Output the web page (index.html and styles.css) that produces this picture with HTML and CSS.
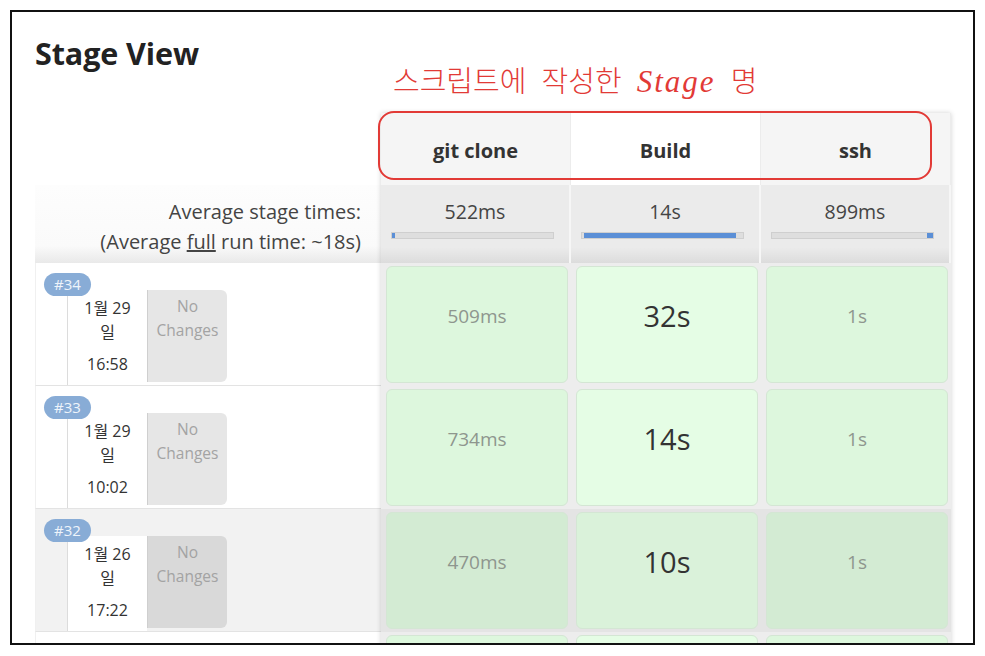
FILE: index.html
```html
<!DOCTYPE html>
<html lang="ko">
<head>
<meta charset="utf-8">
<title>Stage View</title>
<link rel="stylesheet" href="styles.css">
</head>
<body>
<div class="frame">
  <div class="head">
    <h2 class="title">Stage View</h2>
  </div>

  <div class="board">
    <div class="labels">
      <div class="lab-head"></div>
      <div class="lab-avg">
        <div>Average stage times:</div>
        <div>(Average <u>full</u> run time: ~18s)</div>
      </div>
      <div class="run">
        <span class="badge">#34</span>
        <div class="run-body">
          <div class="date"><div class="day">1월 29 일</div><div class="time">16:58</div></div>
          <div class="changes">No Changes</div>
        </div>
      </div>
      <div class="run">
        <span class="badge">#33</span>
        <div class="run-body">
          <div class="date"><div class="day">1월 29 일</div><div class="time">10:02</div></div>
          <div class="changes">No Changes</div>
        </div>
      </div>
      <div class="run hl">
        <span class="badge">#32</span>
        <div class="run-body">
          <div class="date"><div class="day">1월 26 일</div><div class="time">17:22</div></div>
          <div class="changes">No Changes</div>
        </div>
      </div>
      <div class="run"></div>
    </div>

    <div class="stages">
      <div class="st-head">git clone</div>
      <div class="st-head active">Build</div>
      <div class="st-head">ssh</div>

      <div class="st-avg"><div class="avg-time">522ms</div><div class="bar"><div class="fill" style="margin-left:0;width:3px"></div></div></div>
      <div class="st-avg"><div class="avg-time">14s</div><div class="bar"><div class="fill" style="margin-left:2px;width:152px"></div></div></div>
      <div class="st-avg"><div class="avg-time">899ms</div><div class="bar"><div class="fill" style="margin-left:155px;width:8px"></div></div></div>

      <div class="slot"><div class="cell minor">509ms</div></div>
      <div class="slot"><div class="cell major">32s</div></div>
      <div class="slot"><div class="cell minor">1s</div></div>

      <div class="slot"><div class="cell minor">734ms</div></div>
      <div class="slot"><div class="cell major">14s</div></div>
      <div class="slot"><div class="cell minor">1s</div></div>

      <div class="slot hl"><div class="cell minor">470ms</div></div>
      <div class="slot hl"><div class="cell major">10s</div></div>
      <div class="slot hl"><div class="cell minor">1s</div></div>

      <div class="slot"><div class="cell minor"></div></div>
      <div class="slot"><div class="cell major"></div></div>
      <div class="slot"><div class="cell minor"></div></div>
    </div>
  </div>

  <div class="note">스크립트에 작성한 <span class="note-en">Stage</span> 명</div>
  <div class="note-box"></div>
</div>
</body>
</html>
```

FILE: styles.css
```css
html, body {
  margin: 0;
  padding: 0;
  background: #fff;
}

body {
  font-family: "Open Sans", "Noto Sans CJK KR", sans-serif;
  color: #333;
}

.frame {
  position: relative;
  margin: 10px;
  width: 965px;
  height: 635px;
  box-sizing: border-box;
  border: 2px solid #111;
  overflow: hidden;
  background: #fff;
}

.head {
  height: 101px;
  box-sizing: border-box;
  padding: 24px 0 0 23px;
}

.title {
  margin: 0;
  font-size: 30.5px;
  line-height: 35px;
  font-weight: 700;
  color: #222;
  letter-spacing: -0.1px;
}

.board {
  display: flex;
  margin-left: 23px;
  align-items: flex-start;
}

.labels {
  width: 346px;
  flex: none;
}

.lab-head {
  height: 72px;
}

.lab-avg {
  height: 78px;
  box-sizing: border-box;
  padding: 12px 20px 0 0;
  text-align: right;
  font-size: 20px;
  line-height: 30px;
  color: #444;
  background: linear-gradient(#fdfdfd 0, #fafafa 78%, #e9e9e9 100%);
}

.run {
  height: 123px;
  box-sizing: border-box;
  border-bottom: 1px solid #e3e3e3;
  border-left: 1px solid #f0f0f0;
  padding: 10px 0 0 8px;
  background: #fff;
}

.run.hl {
  background: #f2f2f2;
}

.badge {
  position: relative;
  z-index: 1;
  display: block;
  width: 47px;
  height: 23px;
  border-radius: 12px;
  background: #88acd6;
  color: #eef4fb;
  font-size: 15px;
  line-height: 23px;
  text-align: center;
  margin-bottom: -6px;
}

.run-body {
  display: flex;
  margin-left: 23px;
  height: 95px;
}

.date {
  width: 80px;
  box-sizing: border-box;
  border-left: 1px solid #dcdcdc;
  background: #fff;
  text-align: center;
  font-size: 16px;
  line-height: 24px;
  color: #333;
  padding: 6px 10px 0;
}

.time {
  margin-top: 8px;
}

.changes {
  width: 80px;
  height: 92px;
  box-sizing: border-box;
  border-left: 1px solid #cfcfcf;
  border-radius: 0 6px 6px 0;
  background: #e6e6e6;
  color: #a3a3a3;
  font-size: 15.5px;
  line-height: 24px;
  text-align: center;
  padding: 4px 2px 0;
}

.run.hl .changes {
  background: #d9d9d9;
}

.stages {
  display: grid;
  grid-template-columns: repeat(3, 190px);
  grid-template-rows: 72px 78px repeat(4, 123px);
  box-shadow: 0 0 5px rgba(0, 0, 0, 0.18);
}

.st-head {
  background: #f5f5f5;
  text-align: center;
  font-weight: 700;
  font-size: 20px;
  line-height: 24px;
  padding-top: 26px;
  color: #333;
  box-sizing: border-box;
  border-right: 1px solid #ececec;
}

.st-head.active {
  background: #fff;
}

.st-avg {
  box-sizing: border-box;
  padding-top: 15px;
  text-align: center;
  font-size: 19.5px;
  line-height: 24px;
  color: #444;
  border-right: 2px solid #f6f6f6;
  background: linear-gradient(#ebebeb 0, #ebebeb 80%, #dcdcdc 100%);
}

.bar {
  margin: 8px 15px 0 10px;
  height: 7px;
  box-sizing: border-box;
  border: 1px solid #cfcfcf;
  background: #dedede;
  display: flex;
}

.fill {
  height: 5px;
  background: #5b8fd6;
}

.slot {
  background: #ededed;
  padding: 3px 3px 3px 5px;
  box-sizing: border-box;
}

.slot.hl {
  background: #e4e4e4;
}

.cell {
  height: 117px;
  box-sizing: border-box;
  border: 1px solid #d4e6d4;
  border-radius: 6px;
  background: #ddf7dd;
  text-align: center;
  padding-top: 37px;
  line-height: 24px;
}

.cell.minor {
  font-size: 19px;
  color: #8e968e;
}

.cell.major {
  font-size: 29px;
  color: #333;
  background: #e5fde5;
}

.slot.hl .cell {
  background: #d3ebd3;
}

.slot.hl .cell.major {
  background: #daf2da;
}

.note {
  position: absolute;
  left: 381px;
  top: 53px;
  font-family: "Noto Sans CJK KR", sans-serif;
  font-weight: 300;
  font-size: 29px;
  line-height: 29px;
  letter-spacing: 0;
  word-spacing: 7px;
  color: #e23a36;
  white-space: nowrap;
}

.note-en {
  font-family: "Liberation Serif", serif;
  font-style: italic;
  font-size: 31px;
  letter-spacing: 2px;
}

.note-box {
  position: absolute;
  left: 366px;
  top: 99px;
  width: 554px;
  height: 69px;
  box-sizing: border-box;
  border: 2px solid #e23a36;
  border-radius: 16px;
}
```
